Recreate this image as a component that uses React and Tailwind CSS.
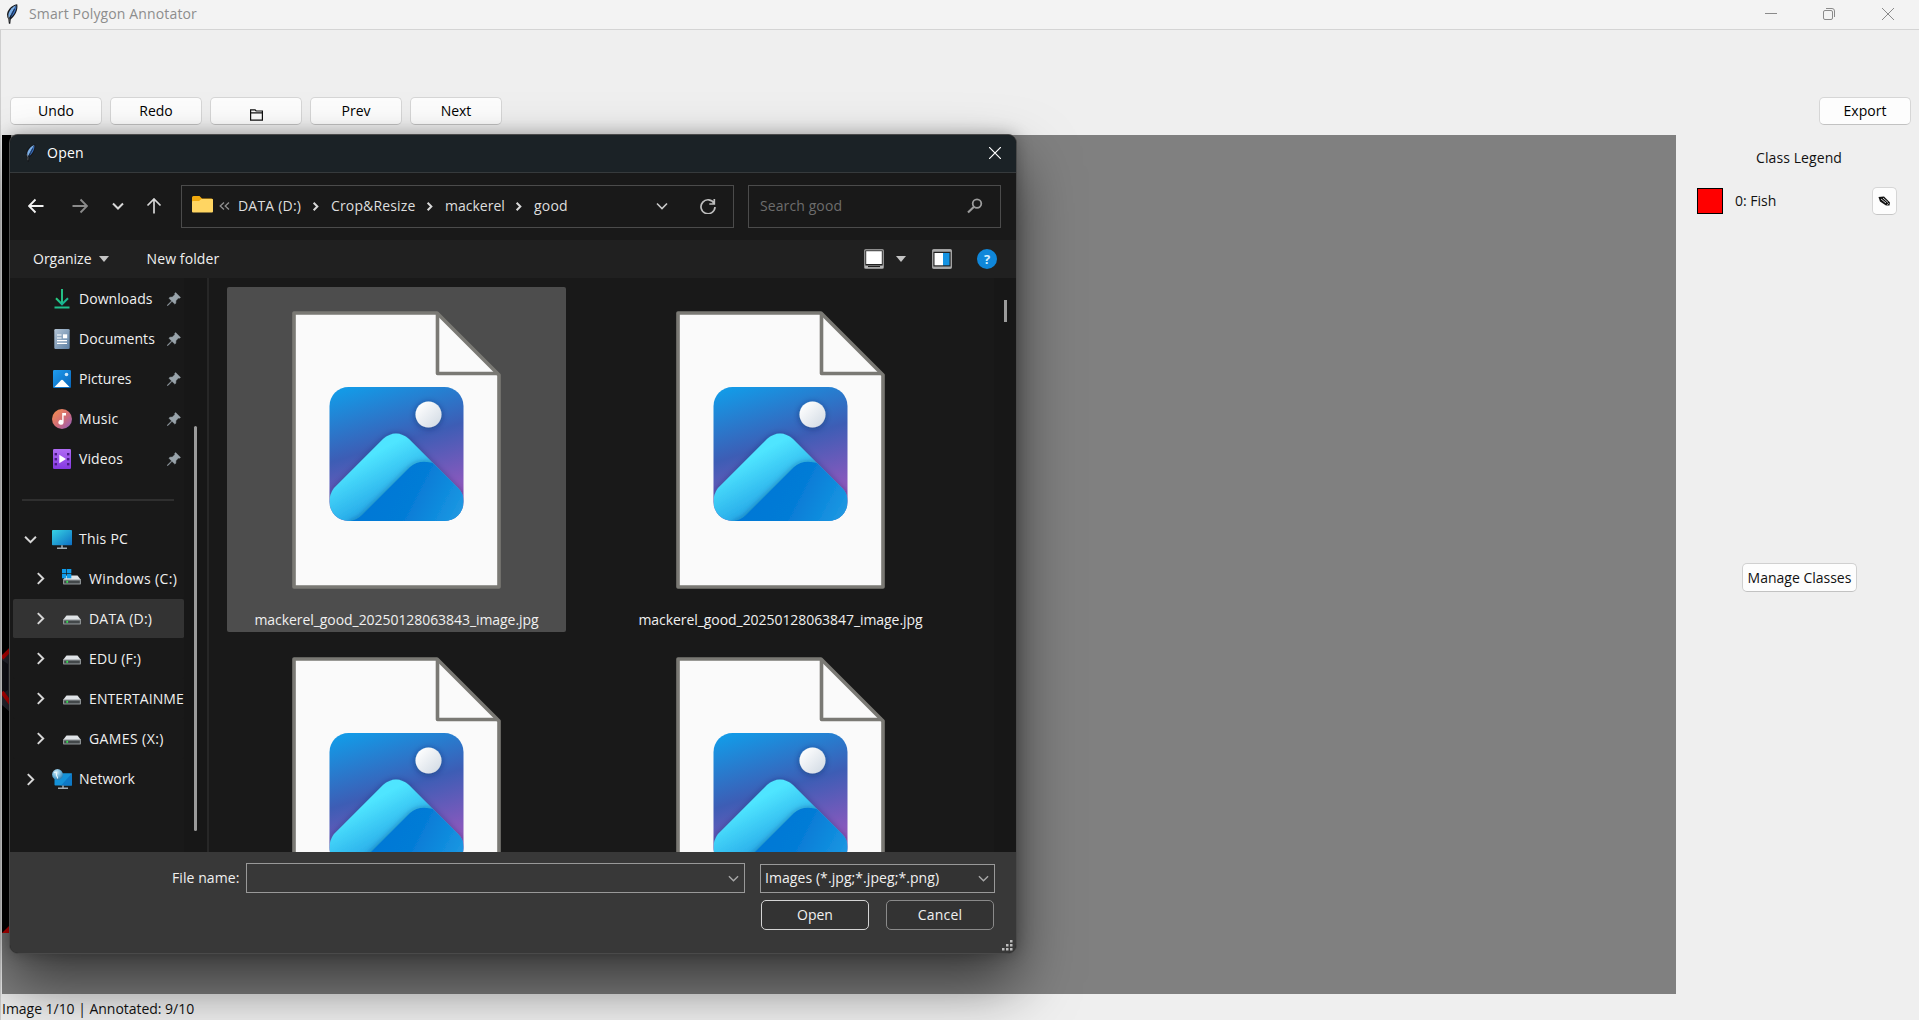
import React from "react";

const pinned = [
  { label: "Downloads", Icon: DownloadsIcon, track: "tracking-[0.06px]" },
  { label: "Documents", Icon: DocumentsIcon, track: "tracking-[0.12px]" },
  { label: "Pictures", Icon: PicturesIcon, track: "" },
  { label: "Music", Icon: MusicIcon, track: "tracking-[0.3px]" },
  { label: "Videos", Icon: VideosIcon, track: "tracking-[0.1px]" },
];

const drives = [
  { label: "Windows (C:)", windows: true, track: "tracking-[0.35px]" },
  { label: "DATA (D:)", active: true, track: "tracking-[0.2px]" },
  { label: "EDU (F:)", track: "tracking-[0.13px]" },
  { label: "ENTERTAINME", track: "tracking-[0.1px]" },
  { label: "GAMES (X:)", track: "tracking-[0.4px]" },
];

const files = [
  { id: 1, name: "mackerel_good_20250128063843_image.jpg", selected: true },
  { id: 2, name: "mackerel_good_20250128063847_image.jpg" },
  { id: 3 },
  { id: 4 },
];

function Feather({ className }) {
  return (
    <svg viewBox="0 0 12 20" className={className}>
      <path d="M11.200.2C7.500.6 3.600 3.400 1.700 7.600.6 10.300.8 13 2.300 15L2.900 19.800l1.400-.1.4-4.300C8.600 12.600 12.400 6.500 11.200.2z" fill="#16181c" />
      <path d="M10.200 1.200C6.900 2.300 3.900 5.500 2.700 9c-.6 2-.4 3.700.3 5L10.200 1.200z" fill="#7db0e6" />
      <path d="M10.400 1.500C10.600 6.200 8.200 10.700 4.800 13.400L5.400 9z" fill="#3a72c2" />
      <path d="M8.500 5L3.600 15" stroke="#12213a" strokeWidth=".9" />
      <path d="M1.900 11.500L3.200 15l-.2 3" stroke="#8c8c8c" strokeWidth=".6" fill="none" />
    </svg>
  );
}

function Chevron({ className, dir = "down", color = "#d8d8d8", width = 1.8 }) {
  return (
    <svg viewBox="0 0 12 12" className={className} fill="none" stroke={color} strokeWidth={width}>
      {dir === "down" ? <path d="M1 3.500l5 5 5-5" /> : <path d="M3.500 1l5 5-5 5" />}
    </svg>
  );
}

function DownloadsIcon() {
  return (
    <svg viewBox="0 0 20 20" className="size-5" fill="none" strokeWidth="2">
      <defs>
        <linearGradient id="dl" x1="0" y1="0" x2="1" y2="1">
          <stop offset="0" stopColor="#2bd07f" />
          <stop offset="1" stopColor="#0fa59b" />
        </linearGradient>
      </defs>
      <path d="M10 0v15" stroke="#25bf86" />
      <path d="M4 9.300l6 6 6-6" stroke="url(#dl)" />
      <rect x="2.500" y="17.500" width="15" height="2" fill="#1fbe8c" />
    </svg>
  );
}

function DocumentsIcon() {
  return (
    <svg viewBox="0 0 20 20" className="size-5">
      <defs>
        <linearGradient id="doc" x1="0" y1="0" x2="1" y2="1">
          <stop offset="0" stopColor="#b4c5d6" />
          <stop offset="1" stopColor="#5c7fa3" />
        </linearGradient>
      </defs>
      <rect x="2.300" y="0" width="15.400" height="20" rx="1.300" fill="url(#doc)" />
      <path d="M5 6h4.500M5 9h4.500M5 11.700h10M5 14.400h10" stroke="#fff" strokeWidth="1.200" />
      <rect x="11" y="5.300" width="4.200" height="4" fill="#fff" />
    </svg>
  );
}

function PicturesIcon() {
  return (
    <svg viewBox="0 0 20 20" className="size-5">
      <defs>
        <linearGradient id="pic" x1="0" y1="0" x2="1" y2="1">
          <stop offset="0" stopColor="#1f9df0" />
          <stop offset="1" stopColor="#0864b8" />
        </linearGradient>
      </defs>
      <rect x="1" y="1" width="18" height="18" rx="1.200" fill="url(#pic)" />
      <path d="M2.500 18l6.300-6.600a1.700 1.700 0 012.400 0l6.300 6.600z" fill="#fff" />
      <circle cx="14.500" cy="5.500" r="1.800" fill="#cfe8fb" />
    </svg>
  );
}

function MusicIcon() {
  return (
    <svg viewBox="0 0 20 20" className="size-5">
      <defs>
        <linearGradient id="mus" x1="0" y1="0" x2="1" y2="1">
          <stop offset="0.100" stopColor="#f18a54" />
          <stop offset="0.550" stopColor="#cf6b78" />
          <stop offset="1" stopColor="#8a5bc4" />
        </linearGradient>
      </defs>
      <circle cx="10" cy="10" r="10" fill="url(#mus)" />
      <path d="M10.200 4h3.800v2.600h-2.400v6.800a2.600 2.400 0 11-1.400-2.200z" fill="#fff" />
    </svg>
  );
}

function VideosIcon() {
  return (
    <svg viewBox="0 0 20 20" className="size-5">
      <defs>
        <linearGradient id="vid" x1="0" y1="0" x2="0" y2="1">
          <stop offset="0" stopColor="#b06cf4" />
          <stop offset="1" stopColor="#8438e0" />
        </linearGradient>
      </defs>
      <rect x="1" y="0" width="18" height="20" rx="1.200" fill="url(#vid)" />
      {[4, 9, 14].map((y) => (
        <g key={y} fill="#4a1c85">
          <rect x="2.600" y={y} width="2.400" height="2.400" />
          <rect x="15" y={y} width="2.400" height="2.400" />
        </g>
      ))}
      <path d="M7.300 5.800v8.400L14 10z" fill="#fff" />
    </svg>
  );
}

function Pin() {
  return (
    <svg viewBox="0 0 14 14" className="size-[14px]">
      <path d="M8.600.5L13.500 5.400 12.300 6.300 11.400 6 8.900 8.700 8.800 11.200 7.800 12 5 9.300 1 13.500.4 13.600.5 13 4.600 8.900 2 6.200 2.900 5.200 5.300 5.100 8 2.600 7.700 1.500z" fill="#98a3aa" stroke="#98a3aa" strokeWidth=".5" />
    </svg>
  );
}

function PcIcon() {
  return (
    <svg viewBox="0 0 20 20" className="size-5">
      <defs>
        <linearGradient id="pc" x1="0" y1="0" x2="1" y2="1">
          <stop offset="0" stopColor="#37d3e4" />
          <stop offset="1" stopColor="#0d6fc4" />
        </linearGradient>
      </defs>
      <rect x="0" y="1" width="20" height="15.200" rx=".8" fill="url(#pc)" />
      <path d="M10 16.200v2.800M5 19.200h10" stroke="#a3adb3" strokeWidth="1.600" />
    </svg>
  );
}

function NetworkIcon() {
  return (
    <svg viewBox="0 0 20 20" className="size-5">
      <defs>
        <radialGradient id="globe" cx=".4" cy=".3" r=".8">
          <stop offset="0" stopColor="#d6effb" />
          <stop offset=".6" stopColor="#5fa9d3" />
          <stop offset="1" stopColor="#1e6a9d" />
        </radialGradient>
      </defs>
      <rect x="2.500" y="4.300" width="17.500" height="12.200" rx=".8" fill="#1592d8" />
      <path d="M20 4.300v12.200H9z" fill="#0e79c6" />
      <path d="M11 16.500v2.500M6 19.300h10" stroke="#a3adb3" strokeWidth="1.500" />
      <circle cx="5.500" cy="5.500" r="5.400" fill="url(#globe)" />
      <path d="M2 3.500c2-.8 3 .2 2.500 2s1.500 2 1 4" stroke="#e9f7fd" strokeWidth="1.100" fill="none" />
    </svg>
  );
}

function DriveIcon({ windows }) {
  return (
    <svg viewBox="0 0 20 20" className="size-5">
      <path d="M4.500 6.500h11L19 11H1z" fill="#dfe3e6" />
      <rect x="1" y="10.500" width="18" height="5" rx=".8" fill="#8d9294" />
      <rect x="2.200" y="11.600" width="15.600" height="2.800" fill="#43484a" />
      <rect x="4.300" y="11.800" width="1.800" height="2" fill="#35e050" />
      {windows && (
        <g fill="#0f9bea">
          <rect x="0" y="0" width="4.300" height="4.300" />
          <rect x="5" y="0" width="4.300" height="4.300" />
          <rect x="0" y="5" width="4.300" height="4.300" />
          <rect x="5" y="5" width="4.300" height="4.300" />
        </g>
      )}
    </svg>
  );
}

function ImageFileIcon() {
  return (
    <svg viewBox="0 0 209 278" className="h-[278px] w-[209px] shrink-0">
      <defs>
        <linearGradient id="sky" x1=".2" y1="0" x2=".5" y2="1">
          <stop offset="0" stopColor="#1499e6" />
          <stop offset=".46" stopColor="#3d5db5" />
          <stop offset=".85" stopColor="#8659bd" />
          <stop offset="1" stopColor="#9a57b5" />
        </linearGradient>
        <linearGradient id="ridge" x1=".25" y1=".3" x2=".55" y2=".66">
          <stop offset="0" stopColor="#4fe5ff" />
          <stop offset="1" stopColor="#27abe9" />
        </linearGradient>
        <linearGradient id="hill" x1=".1" y1=".4" x2="1" y2=".7">
          <stop offset="0" stopColor="#0078d6" />
          <stop offset=".4" stopColor="#057bd6" />
          <stop offset=".75" stopColor="#1592e0" />
          <stop offset="1" stopColor="#3ba1e3" />
        </linearGradient>
        <linearGradient id="moon" x1="0" y1="0" x2="1" y2="1">
          <stop offset=".1" stopColor="#fff" />
          <stop offset="1" stopColor="#cfd8e2" />
        </linearGradient>
        <clipPath id="tile"><rect x="37.500" y="76" width="134" height="134" rx="19" /></clipPath>
        <clipPath id="mount">
          <path d="M42 177L91 128q13-11 26 0L166 177q6 6 5.500 14v19h-134v-19q0-8 4.500-14z" />
        </clipPath>
        <filter id="soft" x="-30%" y="-30%" width="160%" height="160%">
          <feDropShadow dx="0" dy="1" stdDeviation="3" floodColor="#10224f" floodOpacity=".5" />
        </filter>
      </defs>
      <path d="M2 2H145L207 64V276H2z" fill="#fafafa" stroke="#7a7974" strokeWidth="3.600" strokeLinejoin="round" />
      <path d="M145.500 2V62.500H206" fill="none" stroke="#7a7974" strokeWidth="3.600" strokeLinejoin="round" />
      <g clipPath="url(#tile)">
        <rect x="37" y="76" width="135" height="135" fill="url(#sky)" />
        <circle cx="136.500" cy="103.500" r="13" fill="url(#moon)" filter="url(#soft)" />
        <path d="M42 177L91 128q13-11 26 0L166 177q6 6 5.500 14v19h-134v-19q0-8 4.500-14z" fill="url(#ridge)" filter="url(#soft)" />
        <g clipPath="url(#mount)">
          <path d="M58 210q7-1 12-6L118 156q7-6 17-5 5 0 10 3l40 40v40H58z" fill="url(#hill)" filter="url(#soft)" />
        </g>
      </g>
    </svg>
  );
}

function ToolButton({ children, className = "" }) {
  return (
    <button className={`flex h-7 w-[92px] items-center justify-center rounded-[5px] border border-[#d6d6d6] border-b-[#c2c2c2] bg-[#fdfdfd] leading-5 text-black ${className}`}>
      {children}
    </button>
  );
}

function NavRow({ children, className = "" }) {
  return <div className={`flex h-10 shrink-0 items-center whitespace-nowrap ${className}`}>{children}</div>;
}

function Sidebar() {
  return (
    <div className="flex w-[199px] shrink-0 border-r-2 border-[#272727]">
      <div className="w-[174px] shrink-0 pt-[1px]">
        {pinned.map(({ label, Icon, track }) => (
          <NavRow key={label} className="pl-[42px] pr-[3px]">
            <Icon />
            <span className={`ml-[7px] grow ${track}`}>{label}</span>
            <Pin />
          </NavRow>
        ))}
        <div className="flex h-10 items-center pl-[12px] pt-[1px]">
          <div className="h-[2px] w-[152px] bg-[#2f2f2f]" />
        </div>
        <NavRow className="pl-[14px]">
          <Chevron className="size-[13px]" />
          <span className="ml-[15px]"><PcIcon /></span>
          <span className="ml-[7px] tracking-[0.25px]">This PC</span>
        </NavRow>
        {drives.map(({ label, windows, active, track }) => (
          <div key={label} className="h-10 pl-[3px]">
            <div className={`flex h-10 items-center whitespace-nowrap rounded-[2px] border-b border-[#191919] pl-[21px] ${active ? "bg-[#333333]" : ""}`}>
              <Chevron dir="right" className="size-[13px] shrink-0" />
              <span className="ml-[15px] shrink-0"><DriveIcon windows={windows} /></span>
              <span className={`ml-[7px] ${track}`}>{label}</span>
            </div>
          </div>
        ))}
        <NavRow className="pl-[14px]">
          <Chevron dir="right" className="size-[13px]" />
          <span className="ml-[15px]"><NetworkIcon /></span>
          <span className="ml-[7px]">Network</span>
        </NavRow>
      </div>
      <div className="flex grow flex-col bg-[#171717] pl-[10px]">
        <div className="mt-[148px] h-[405px] w-[3px] rounded-full bg-[#9b9b9b]" />
      </div>
    </div>
  );
}

function Crumb({ children, className = "" }) {
  return <span className={`text-[#dedede] ${className}`}>{children}</span>;
}

function OpenDialog() {
  return (
    <div className="absolute left-[9px] top-[134px] flex h-[820px] w-[1008px] flex-col overflow-hidden rounded-[9px] border border-[#4a4a4a] bg-[#191919] text-[#f0f0f0] shadow-[0_0_16px_rgba(0,0,0,0.28),0_30px_60px_rgba(0,0,0,0.55)]">
      <header className="flex h-[38px] shrink-0 items-center border-b border-[#363a3c] bg-[#1b2226] pb-[2px] pl-[15px] pr-[15px]">
        <Feather className="h-[18px] w-[11px]" />
        <span className="ml-[11px] grow tracking-[0.25px] text-white">Open</span>
        <svg viewBox="0 0 12 12" className="size-[12px]" stroke="#fff" strokeWidth="1.200"><path d="M0 0l12 12M12 0L0 12" /></svg>
      </header>

      <div className="flex h-[67px] shrink-0 items-center pb-[1px]">
        <svg viewBox="0 0 16 16" className="ml-[18px] size-[16px]" fill="none" stroke="#f2f2f2" strokeWidth="1.900"><path d="M15.500 8H1.500M7.500 1.500L1 8l6.500 6.500" /></svg>
        <svg viewBox="0 0 16 16" className="ml-[28px] size-[16px]" fill="none" stroke="#8a8a8a" strokeWidth="1.900"><path d="M.5 8h14M8.500 1.500L15 8l-6.500 6.500" /></svg>
        <Chevron className="ml-[24px] size-[12px]" width={2} />
        <svg viewBox="0 0 16 16" className="ml-[22px] size-[16px]" fill="none" stroke="#d8d8d8" strokeWidth="1.700"><path d="M8 15.500V1.500M1.500 7.500L8 1l6.500 6.500" /></svg>
        <div className="ml-[19px] flex h-[43px] w-[553px] items-center border border-[#4b4b4b] pl-[10px]">
          <svg viewBox="0 0 21 17" className="mb-[3px] h-[17px] w-[21px]">
            <path d="M0 1.500Q0 0 1.500 0h6L10 2.500h9.500Q21 2.500 21 4v6H0z" fill="#f0a90e" />
            <path d="M0 6q0-1 1-1h6l2.500-2H20q1 0 1 1v11.500q0 1-1 1H1q-1 0-1-1z" fill="#ffd562" />
          </svg>
          <svg viewBox="0 0 11 8" className="ml-[6px] h-[8px] w-[11px]" fill="none" stroke="#8f8f8f" strokeWidth="1.300"><path d="M5 .5L1.200 4 5 7.500M10 .5L6.200 4 10 7.500" /></svg>
          <Crumb className="ml-[8px] w-[64px] tracking-[0.2px]">DATA (D:)</Crumb>
          <Chevron dir="right" className="ml-[9px] size-[9px]" width={2.600} />
          <Crumb className="ml-[11px] w-[85px] tracking-[0.14px]">Crop&amp;Resize</Crumb>
          <Chevron dir="right" className="ml-[9px] size-[9px]" width={2.600} />
          <Crumb className="ml-[11px] w-[60px]">mackerel</Crumb>
          <Chevron dir="right" className="ml-[9px] size-[9px]" width={2.600} />
          <Crumb className="ml-[11px] grow tracking-[0.2px]">good</Crumb>
          <Chevron className="size-[12px]" color="#c8c8c8" width={1.600} />
          <svg viewBox="0 0 16 16" className="ml-[32px] mr-[17px] size-[16px]" fill="none" stroke="#bdbdbd" strokeWidth="1.700"><path d="M14.200 5.500A7 7 0 1015 9M14.300 1v5h-5" /></svg>
        </div>
        <div className="ml-[14px] flex h-[43px] w-[253px] items-center border border-[#4b4b4b] pl-[11px] pr-[17px]">
          <span className="grow tracking-[0.1px] text-[#6d6d6d]">Search good</span>
          <svg viewBox="0 0 16 16" className="size-[16px]" fill="none" stroke="#9c9c9c"><circle cx="10" cy="5.600" r="4.300" strokeWidth="1.800" /><path d="M7 8.800L1 14.500" strokeWidth="2.200" /></svg>
        </div>
      </div>

      <div className="flex h-[38px] shrink-0 items-center bg-[#202020] pl-[23px] pr-[19px]">
        <span>Organize</span>
        <svg viewBox="0 0 10 6" className="ml-[7px] h-[6px] w-[10px]" fill="#c4c4c4"><path d="M0 0h10L5 6z" /></svg>
        <span className="ml-[38px] grow tracking-[0.1px]">New folder</span>
        <svg viewBox="0 0 20 20" className="size-5">
          <rect x=".7" y=".7" width="18.600" height="18.600" rx="1" fill="#222" stroke="#8e8e8e" strokeWidth="1.400" />
          <rect x="2.200" y="2.200" width="15.600" height="12.800" fill="#fff" />
          <path d="M1 16.500h18V19H1z" fill="#b4b4b4" />
          <path d="M4 17.600h12" stroke="#111" strokeWidth="1" />
        </svg>
        <svg viewBox="0 0 10 6" className="ml-[12px] h-[6px] w-[10px]" fill="#c4c4c4"><path d="M0 0h10L5 6z" /></svg>
        <svg viewBox="0 0 20 20" className="ml-[26px] size-5">
          <rect x=".7" y=".7" width="18.600" height="18.600" rx="1" fill="#222" stroke="#a2a2a2" strokeWidth="1.400" />
          <path d="M1 1h18v1.800H1zM1 17.500h18V19H1z" fill="#a9a9a9" />
          <rect x="2.500" y="4" width="8.500" height="12.300" fill="#fff" />
          <rect x="11" y="4" width="6.500" height="12.300" fill="#1593e2" />
        </svg>
        <span className="ml-[25px] flex size-5 items-center justify-center rounded-full bg-[#0f87da] text-[13px] font-bold leading-none text-[#d5efff]">?</span>
      </div>

      <div className="flex h-[574px] shrink-0 overflow-hidden">
        <Sidebar />
        <div className="grid grow grid-cols-[339px_339px] content-start gap-x-[45px] gap-y-[1px] pl-[18px] pt-[9px]">
          {files.map((f) => (
            <div key={f.id} className={`flex h-[345px] flex-col items-center rounded-[2px] pt-[24px] ${f.selected ? "bg-[#4d4d4d]" : ""}`}>
              <ImageFileIcon />
              {f.name && <span className="mt-[21px] tracking-[-0.06px]">{f.name}</span>}
            </div>
          ))}
        </div>
        <div className="w-[22px] shrink-0 bg-[#171717] pl-[10px] pt-[22px]">
          <div className="h-[22px] w-[3px] bg-[#9b9b9b]" />
        </div>
      </div>

      <footer className="relative grow bg-[#383838] pt-[11px]">
        <div className="flex items-center">
          <span className="ml-[162px] w-[74px] tracking-[0.08px]">File name:</span>
          <div className="flex h-[30px] w-[499px] items-center justify-end border border-[#999999] pr-[5px]">
            <Chevron className="size-[11px]" color="#a8a8a8" width={1.500} />
          </div>
          <div className="ml-[15px] flex h-[29px] w-[235px] items-center justify-between border border-[#999999] bg-[#333333] pl-[4px] pr-[5px]">
            <span className="tracking-[0.07px]">Images (*.jpg;*.jpeg;*.png)</span>
            <Chevron className="size-[11px]" color="#a8a8a8" width={1.500} />
          </div>
        </div>
        <div className="mt-[7px] flex gap-[17px] pl-[751px]">
          <button className="h-[30px] w-[108px] rounded-[5px] border-[1.500px] border-[#d4d4d4] bg-[#333333] leading-5">Open</button>
          <button className="h-[30px] w-[108px] rounded-[5px] border border-[#8a8a8a] bg-[#333333] leading-5 tracking-[0.2px]">Cancel</button>
        </div>
        <svg viewBox="0 0 11 11" className="absolute bottom-[2px] right-[3px] size-[11px]" fill="#bdbdbd">
          <path d="M8 0h2.500v2.500H8zM8 4h2.500v2.500H8zM8 8h2.500v2.500H8zM4 4h2.500v2.500H4zM4 8h2.500v2.500H4zM0 8h2.500v2.500H0z" />
        </svg>
      </footer>
    </div>
  );
}

export default function App() {
  return (
    <div className="relative flex h-[1020px] w-[1919px] flex-col overflow-hidden bg-[#efefef] font-['Open_Sans',sans-serif] text-[14px] leading-5 text-[#111]">
      <header className="flex h-[30px] shrink-0 items-center border-b border-[#d4d4d4] bg-[#f3f3f3] pb-[1px] pl-[6px] pr-[25px]">
        <Feather className="mb-[1px] h-[20px] w-[12px]" />
        <span className="ml-[11px] grow tracking-[0.14px] text-[#8d8d8d]">Smart Polygon Annotator</span>
        <svg viewBox="0 0 12 12" className="size-[12px]" stroke="#8a8a8a"><path d="M0 5.500h12" /></svg>
        <svg viewBox="0 0 12 12" className="ml-[46px] size-[12px]" fill="none" stroke="#8a8a8a"><rect x=".5" y="2.500" width="9" height="9" rx="1.500" /><path d="M3 .5h6a2.500 2.500 0 012.500 2.500v6" /></svg>
        <svg viewBox="0 0 12 12" className="ml-[47px] size-[12px]" stroke="#8a8a8a"><path d="M0 0l12 12M12 0L0 12" /></svg>
      </header>

      <div className="flex h-[105px] shrink-0 items-end gap-2 border-l border-[#cfcfcf] pb-[10px] pl-[9px] pr-[8px]">
        <ToolButton>Undo</ToolButton>
        <ToolButton>Redo</ToolButton>
        <ToolButton>
          <svg viewBox="0 0 13 12" className="mt-[7px] h-[12px] w-[13px]" fill="none" stroke="#111" strokeWidth="1.200"><path d="M.6 11.200V.8h4.500l1 1.200h6.300v9.200zM.6 3.900h11.800" /></svg>
        </ToolButton>
        <ToolButton>Prev</ToolButton>
        <ToolButton className="mr-auto">Next</ToolButton>
        <ToolButton>Export</ToolButton>
      </div>

      <div className="flex h-[859px] shrink-0 border-l border-[#cfcfcf]">
        <div className="ml-[1px] w-[1674px] shrink-0 bg-[#808080]">
          <div className="h-[798px] w-[9px] overflow-hidden bg-black">
            <svg viewBox="0 0 9 798" className="h-[798px] w-[9px]">
              <path d="M0 520l9-8v66l-9-8z" fill="#2b2b36" />
              <path d="M0 525v34l6-4v-26z" fill="#14141b" />
              <path d="M0 523l9-9M0 557l9 12" stroke="#d40000" strokeWidth="4" />
              <path d="M0 798l9-9v9z" fill="#d40000" />
            </svg>
          </div>
        </div>
        <aside className="flex grow flex-col items-center">
          <div className="mt-[13px] pl-[3px] tracking-[0.09px]">Class Legend</div>
          <div className="mt-[19px] flex h-[28px] w-full items-center pl-[21px] pr-[22px]">
            <div className="size-[26px] border border-black bg-[#ff0000]" />
            <span className="ml-[12px] grow">0: Fish</span>
            <button className="flex h-[28px] w-[25px] items-center justify-center rounded-[5px] border border-[#d6d6d6] border-b-[#c6c6c6] bg-[#fdfdfd]">
              <svg viewBox="0 0 13 10" className="h-[10px] w-[13px]">
                <path d="M.5 1L6 .5l6 6-.5 3H8L2 5.500z" fill="#111" />
                <path d="M3 3l5 4M5 2l5 4.500" stroke="#fff" strokeWidth=".8" />
                <path d="M8.800 9l2.400-2" stroke="#fff" strokeWidth=".6" />
              </svg>
            </button>
          </div>
          <button className="ml-[4px] mt-[348px] flex h-[29px] w-[115px] items-center justify-center whitespace-nowrap rounded-[5px] border border-[#d0d0d0] border-b-[#c2c2c2] bg-[#fdfdfd] leading-5">Manage Classes</button>
        </aside>
      </div>

      <footer className="flex grow items-center border-l border-[#cfcfcf] pl-[1px] pt-[3px] tracking-[-0.03px]">Image 1/10 | Annotated: 9/10</footer>

      <OpenDialog />
    </div>
  );
}
